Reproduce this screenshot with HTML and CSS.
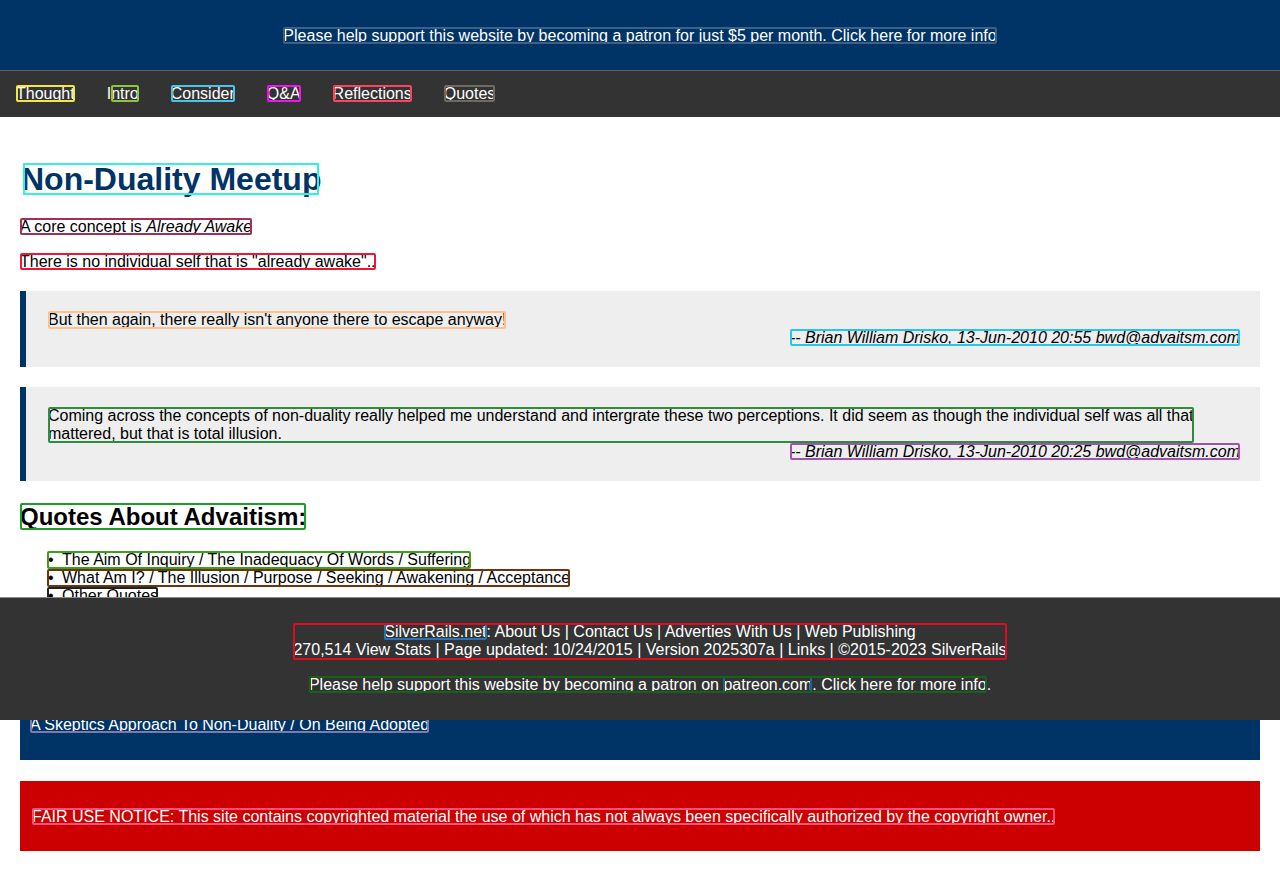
FILE: index.html
```html
<!DOCTYPE html>
<html lang="en">
<head>
<meta charset="utf-8">
<title>Non-Duality Meetup</title>
<link rel="stylesheet" href="styles.css">
</head>
<body>
<header class="banner">
  <a class="ol c-banner">Please help support this website by becoming a patron for just $5 per month. Click here for more info</a>
</header>
<nav class="nav">
  <a class="nav-item"><span class="ol c-thought">Thought</span></a>
  <a class="nav-item">I<span class="ol c-intro">ntro</span></a>
  <a class="nav-item"><span class="ol c-consider">Consider</span></a>
  <a class="nav-item"><span class="ol c-qa">Q&amp;A</span></a>
  <a class="nav-item"><span class="ol c-refl">Reflections</span></a>
  <a class="nav-item"><span class="ol c-quotes">Quotes</span></a>
</nav>
<main class="main">
  <h1 class="title"><span class="ol ol-big c-h1">Non-Duality Meetup</span></h1>
  <p class="para"><span class="ol c-p1">A core concept is <em>Already Awake</em></span></p>
  <p class="para"><span class="ol c-p2">There is no individual self that is "already awake"..</span></p>

  <blockquote class="quote">
    <div class="quote-text ol c-q1">But then again, there really isn't anyone there to escape anyway!</div>
    <div class="quote-attr"><span class="ol c-a1">-- Brian William Drisko, 13-Jun-2010 20:55 bwd@advaitsm.com</span></div>
  </blockquote>

  <blockquote class="quote">
    <div class="quote-text ol c-q2">Coming across the concepts of non-duality really helped me understand and intergrate these two perceptions. It did seem as though the individual self was all that<br>mattered, but that is total illusion.</div>
    <div class="quote-attr"><span class="ol c-a2">-- Brian William Drisko, 13-Jun-2010 20:25 bwd@advaitsm.com</span></div>
  </blockquote>

  <h2 class="subtitle"><span class="ol c-h2">Quotes About Advaitism:</span></h2>
  <ul class="quote-list">
    <li class="ol c-li1">The Aim Of Inquiry / The Inadequacy Of Words / Suffering</li>
    <li class="ol c-li2">What Am I? / The Illusion / Purpose / Seeking / Awakening / Acceptance</li>
    <li class="ol c-li3">Other Quotes</li>
  </ul>

  <section class="related">
    <p class="related-line">Related Articles: Non-Duality / Advaita Vedanta / Self Inquiry</p>
    <p class="related-line">The Witness / Presence / Consciousness / Meditation</p>
    <p class="related-line"><span class="ol c-skep">A Skeptics Approach To Non-Duality / On Being Adopted</span></p>
  </section>

  <section class="notice">
    <span class="ol c-fair">FAIR USE NOTICE: This site contains copyrighted material the use of which has not always been specifically authorized by the copyright owner..</span>
  </section>
</main>

<footer class="footer">
  <div class="footer-links ol c-foot"><span class="ol c-silver">SilverRails.net</span>: About Us | Contact Us | Adverties With Us | Web Publishing<br>270,514 View Stats | Page updated: 10/24/2015 | Version 2025307a | Links | ©2015-2023 SilverRails</div>
  <p class="footer-patron"><span class="ol c-patron">Please help support this website by becoming a patron on <span class="ol c-patreon">patreon.com</span>. Click here for more info</span>.</p>
</footer>
</body>
</html>
```

FILE: styles.css
```css
* { box-sizing: border-box; }

html, body {
  margin: 0;
  padding: 0;
}

body {
  font-family: "Liberation Sans", Arial, sans-serif;
  font-size: 16px;
  line-height: normal;
  color: #000;
  background: #fff;
}

/* annotation outlines */
.ol {
  outline: 2px solid transparent;
  outline-offset: -2px;
  border-radius: 2px;
}
.ol-big { outline-offset: -4px; }

.c-banner  { outline-color: #3f6085; }
.c-thought { outline-color: #f3e744; }
.c-intro   { outline-color: #8cc63e; }
.c-consider{ outline-color: #4cc2ea; }
.c-qa      { outline-color: #f014f0; }
.c-refl    { outline-color: #ff4263; }
.c-quotes  { outline-color: #6f6a62; }
.c-h1      { outline-color: #34f0e0; }
.c-p1      { outline-color: #a52d5b; }
.c-p2      { outline-color: #ec1636; }
.c-q1      { outline-color: #ffc08c; }
.c-a1      { outline-color: #1fc7f5; }
.c-q2      { outline-color: #2f8c3c; }
.c-a2      { outline-color: #a153b0; }
.c-h2      { outline-color: #1c9c2a; }
.c-li1     { outline-color: #3aa11a; }
.c-li2     { outline-color: #73320f; }
.c-li3     { outline-color: #172824; }
.c-foot    { outline-color: #de0c20; }
.c-silver  { outline-color: #2576b5; }
.c-patron  { outline-color: #17621a; }
.c-patreon { outline-color: #1a6489; }
.c-skep    { outline-color: #7d7bab; }
.c-fair    { outline-color: #ff5079; }

/* top banner */
.banner {
  background: #003366;
  color: #fff;
  text-align: center;
  padding: 27px 0 25px;
  height: 70px;
}
.banner a { color: #fff; }

/* navigation */
.nav {
  display: flex;
  background: #333333;
  border-top: 1px solid #5e6065;
  padding: 14px 0;
  height: 47px;
}
.nav-item {
  color: #fff;
  padding: 0 16px;
  line-height: 18.4px;
}

/* main content */
.main {
  padding: 23px 20px 20px;
}

.title {
  color: #003366;
  font-size: 32px;
  font-weight: bold;
  margin: 21px 1px 20px;
}

.para {
  margin: 17px 0;
}

.quote {
  margin: 20px 0;
  background: #eeeeee;
  border-left: 6px solid #003366;
  padding: 20px 20px 20px 22px;
}
.quote-text {
  width: fit-content;
}
.quote-attr {
  text-align: right;
  font-style: italic;
}

.subtitle {
  font-size: 24px;
  font-weight: bold;
  margin: 22px 0 20px;
}

.quote-list {
  margin: 0 0 20px;
  padding-left: 27px;
  list-style: none;
}
.quote-list li {
  width: fit-content;
}
.quote-list li::before {
  content: "•";
  display: inline-block;
  width: 14px;
  padding-left: 1px;
}

.related {
  background: #003366;
  color: #fff;
  padding: 23px 10px 26px;
  margin-bottom: 21px;
}
.related-line {
  margin: 0 0 16px;
}
.related-line:last-child { margin-bottom: 0; }

.notice {
  background: #cc0000;
  color: #fff;
  padding: 27px 12px 25px;
  height: 70px;
}

/* fixed footer */
.footer {
  position: fixed;
  left: 0;
  right: 0;
  top: 597px;
  background: #333333;
  border-top: 1px solid #8a8a8a;
  color: #fff;
  text-align: center;
  padding: 25px 0 26px 20px;
}
.footer-links {
  display: inline-block;
  line-height: 18.4px;
}
.footer-patron {
  margin: 16px 0 0;
}
```
